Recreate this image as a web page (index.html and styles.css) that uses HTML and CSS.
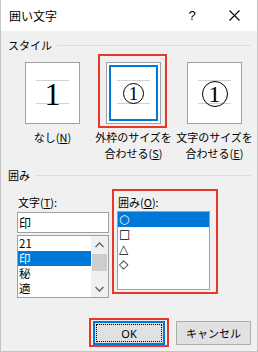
FILE: index.html
```html
<!DOCTYPE html>
<html lang="ja">
<head>
    <meta charset="UTF-8">
    <title>囲い文字</title>
    <link rel="stylesheet" href="styles.css">
</head>
<body>
    <div class="dialog">
        <div class="titlebar">
            <span class="title">囲い文字</span>
            <span class="help">?</span>
            <span class="close">
                <svg width="11" height="11" viewBox="0 0 11 11"><path d="M0.5 0.5L10.5 10.5M10.5 0.5L0.5 10.5" stroke="#000" stroke-width="1.1" fill="none"/></svg>
            </span>
        </div>
        <div class="content">
            <div class="group-head"><span>スタイル</span><i class="rule"></i></div>
            <div class="styles">
                <div class="style-opt">
                    <div class="preview"><span class="digit">1</span></div>
                    <div class="opt-label">なし(<u>N</u>)</div>
                </div>
                <div class="style-opt">
                    <div class="preview selected"><span class="ring small">1</span></div>
                    <div class="opt-label">外枠のサイズを<br>合わせる(<u>S</u>)</div>
                </div>
                <div class="style-opt">
                    <div class="preview"><span class="ring large">1</span></div>
                    <div class="opt-label">文字のサイズを<br>合わせる(<u>E</u>)</div>
                </div>
            </div>

            <div class="group-head"><span>囲み</span><i class="rule"></i></div>
            <div class="enclose">
                <div class="char-col">
                    <div class="field-label">文字(<u>T</u>):</div>
                    <div class="textbox">印</div>
                    <div class="listbox">
                        <div class="items">
                            <div class="item">21</div>
                            <div class="item sel">印</div>
                            <div class="item">秘</div>
                            <div class="item">適</div>
                        </div>
                        <div class="scrollbar">
                            <div class="arrow"><svg width="9" height="6" viewBox="0 0 9 6"><path d="M0.5 5L4.5 1L8.5 5" stroke="#606060" stroke-width="1.3" fill="none"/></svg></div>
                            <div class="track"><div class="thumb"></div></div>
                            <div class="arrow"><svg width="9" height="6" viewBox="0 0 9 6"><path d="M0.5 1L4.5 5L8.5 1" stroke="#606060" stroke-width="1.3" fill="none"/></svg></div>
                        </div>
                    </div>
                </div>
                <div class="shape-frame">
                    <div class="field-label">囲み(<u>O</u>):</div>
                    <div class="shape-list">
                        <div class="item shape sel">○</div>
                        <div class="item shape">□</div>
                        <div class="item shape">△</div>
                        <div class="item shape">◇</div>
                    </div>
                </div>
            </div>

            <div class="buttons">
                <button class="btn default">OK</button>
                <button class="btn cancel">キャンセル</button>
            </div>
        </div>
    </div>
</body>
</html>
```

FILE: styles.css
```css
* {
    box-sizing: border-box;
}
body {
    margin: 0;
    font-family: "Noto Sans CJK JP", "Noto Sans", sans-serif;
    font-size: 11px;
    color: #000;
    background: #fff;
}
u {
    text-decoration: underline;
}
.dialog {
    width: 258px;
    height: 352px;
    background: #f0f0f0;
    border: 1px solid #c4c4c4;
    border-top: none;
    display: flex;
    flex-direction: column;
}
.titlebar {
    height: 31px;
    flex-shrink: 0;
    background: #fff;
    display: flex;
    align-items: center;
    padding-left: 8px;
    font-size: 12px;
}
.title {
    flex: 1;
}
.help {
    width: 14px;
    text-align: center;
    font-family: "Liberation Sans", sans-serif;
    font-size: 13px;
    margin-right: 30px;
}
.close {
    width: 11px;
    height: 11px;
    display: flex;
    margin-right: 17px;
}
.content {
    padding: 0 6px 0 7px;
}
.group-head {
    display: flex;
    align-items: center;
    height: 16px;
    margin-top: 6px;
    line-height: 16px;
}
.rule {
    flex: 1;
    height: 1px;
    background: #dcdcdc;
    margin-left: 5px;
    margin-top: 1px;
}
.styles {
    display: grid;
    grid-template-columns: repeat(3, 81px);
    margin-top: 9px;
    margin-left: 4px;
}
.style-opt {
    display: flex;
    flex-direction: column;
    align-items: center;
}
.preview {
    position: relative;
    width: 55px;
    height: 62px;
    background-color: #fff;
    background-image: linear-gradient(#d2d2d2, #d2d2d2), linear-gradient(#d2d2d2, #d2d2d2);
    background-size: 33px 1px;
    background-position: 10px 17px, 10px 40px;
    background-repeat: no-repeat;
    border: 1px solid #a0a0a0;
    display: flex;
    align-items: center;
    justify-content: center;
}
.preview.selected {
    box-shadow: inset 0 0 0 2px #fff, inset 0 0 0 4px #0078d7;
}
.preview.selected::after {
    content: "";
    position: absolute;
    top: -9px;
    left: -9px;
    right: -7px;
    bottom: -5px;
    border: 2px solid #e8372c;
}
.digit {
    font-family: "Liberation Serif", serif;
    font-size: 32px;
    line-height: 1;
    margin-top: 1px;
}
.ring {
    display: flex;
    align-items: center;
    justify-content: center;
    border: 1px solid #000;
    border-radius: 50%;
    font-family: "Liberation Serif", serif;
    line-height: 1;
}
.ring.small {
    width: 21px;
    height: 21px;
    font-size: 19px;
    margin-top: 1px;
}
.ring.large {
    width: 26px;
    height: 26px;
    font-size: 24px;
    margin-top: 2px;
}
.opt-label {
    margin-top: 5px;
    line-height: 16px;
    text-align: center;
    white-space: nowrap;
}
.enclose {
    display: flex;
    gap: 3px;
    margin-top: 6px;
    margin-left: 9px;
}
.char-col {
    width: 92px;
}
.field-label {
    line-height: 16px;
    margin-top: 5px;
    padding-left: 1px;
}
.textbox {
    height: 21px;
    margin-top: 2px;
    border: 1px solid #a0a0a0;
    background: #fff;
    font-size: 12px;
    line-height: 19px;
    padding-left: 1px;
}
.listbox {
    height: 63px;
    margin-top: 2px;
    border: 1px solid #a0a0a0;
    background: #fff;
    display: flex;
    overflow: hidden;
}
.items {
    flex: 1;
}
.item {
    height: 15px;
    line-height: 15px;
    font-size: 10px;
    padding-left: 1px;
    white-space: nowrap;
}
.items .item {
    font-size: 11.5px;
}
.item.sel {
    background: #0078d7;
    color: #fff;
}
.scrollbar {
    width: 17px;
    background: #f0f0f0;
    display: flex;
    flex-direction: column;
}
.arrow {
    height: 17px;
    display: flex;
    align-items: center;
    justify-content: center;
}
.track {
    flex: 1;
    padding: 1px 1px 0;
}
.thumb {
    height: 17px;
    background: #cdcdcd;
}
.shape-frame {
    width: 106px;
    height: 105px;
    border: 2px solid #e8372c;
    padding: 3px 6px 2px 3px;
}
.shape-frame .field-label {
    margin-top: 0;
    line-height: 17px;
}
.shape-list {
    height: 79px;
    border: 1px solid #a0a0a0;
    background: #fff;
}
.item.shape {
    font-family: "DejaVu Sans", sans-serif;
    font-size: 12px;
    color: #000;
}
.item.shape.sel {
    color: #fff;
}
.buttons {
    display: flex;
    justify-content: flex-end;
    gap: 11px;
    margin-top: 23px;
}
.btn {
    position: relative;
    height: 24px;
    padding: 0;
    font-family: "Noto Sans", "Noto Sans CJK JP", sans-serif;
    font-size: 11px;
    font-weight: 400;
    color: #000;
    background: #e1e1e1;
    border: 1px solid #adadad;
}
.btn.default {
    width: 72px;
    border-color: #0078d7;
    box-shadow: inset 0 0 0 1px #0078d7;
    outline: 1px dotted #000;
    outline-offset: -4px;
}
.btn.default::after {
    content: "";
    position: absolute;
    top: -4px;
    left: -5px;
    right: -5px;
    bottom: -3px;
    border: 2px solid #e8372c;
}
.btn.cancel {
    width: 75px;
}
```
